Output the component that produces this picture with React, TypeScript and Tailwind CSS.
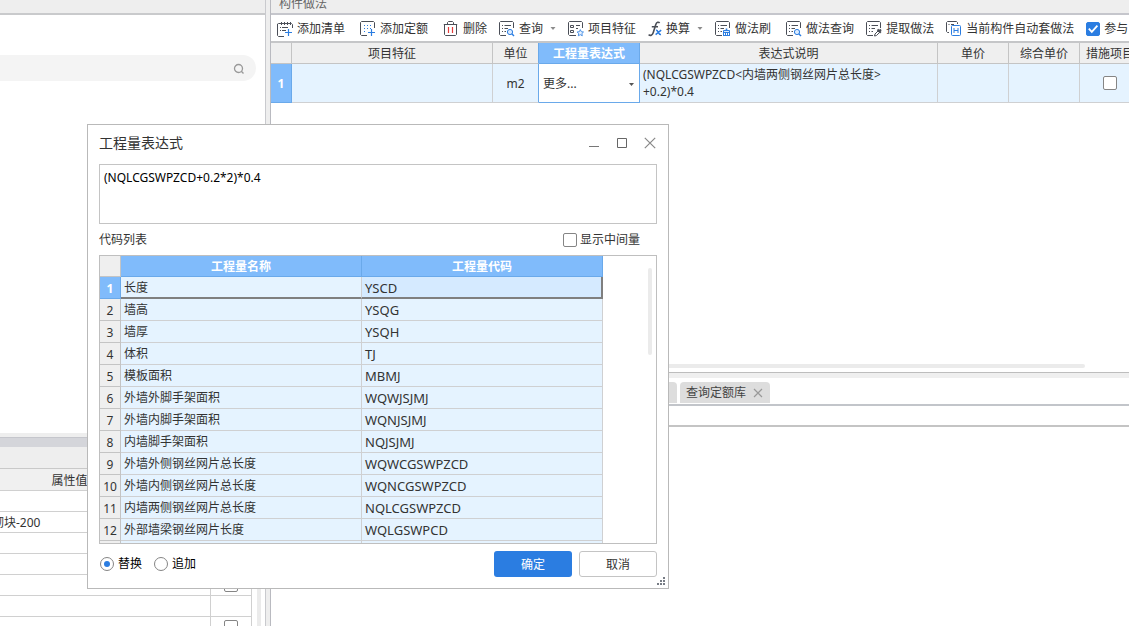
import { useState } from "react";
import type { ReactNode } from "react";

const INK = "#4a4e57";
const BLUE = "#2b7de1";

interface CodeRow {
  name: string;
  code: string;
}

const CODE_ROWS: CodeRow[] = [
  { name: "长度", code: "YSCD" },
  { name: "墙高", code: "YSQG" },
  { name: "墙厚", code: "YSQH" },
  { name: "体积", code: "TJ" },
  { name: "模板面积", code: "MBMJ" },
  { name: "外墙外脚手架面积", code: "WQWJSJMJ" },
  { name: "外墙内脚手架面积", code: "WQNJSJMJ" },
  { name: "内墙脚手架面积", code: "NQJSJMJ" },
  { name: "外墙外侧钢丝网片总长度", code: "WQWCGSWPZCD" },
  { name: "外墙内侧钢丝网片总长度", code: "WQNCGSWPZCD" },
  { name: "内墙两侧钢丝网片总长度", code: "NQLCGSWPZCD" },
  { name: "外部墙梁钢丝网片长度", code: "WQLGSWPCD" },
];

const PROPERTY_ROWS = [
  { value: "", check: false },
  { value: "砌块-200", check: false },
  { value: "", check: false },
  { value: "", check: false },
  { value: "", check: true },
  { value: "", check: false },
  { value: "", check: true },
];

function Icon({ children }: { children: ReactNode }) {
  return (
    <svg
      width="16"
      height="16"
      viewBox="0 0 16 16"
      fill="none"
      stroke={INK}
      strokeWidth="1"
      className="shrink-0"
      aria-hidden
    >
      {children}
    </svg>
  );
}

function AddListIcon() {
  return (
    <Icon>
      <path d="M7 15.5H1.5L.5 14.5V3L1.5 2.5H14.5L15.5 3.5V7" />
      <path d="M4.5 1V4M7.5 1V4M10.5 1V4M13.5 1V4" />
      <path d="M3 6.5H4M5 6.5H11M3 9.5H4M5 9.5H9" />
      <path d="M11.5 8V15M8 11.5H15" stroke={BLUE} strokeWidth="1.2" />
    </Icon>
  );
}

function AddQuotaIcon() {
  return (
    <Icon>
      <path d="M7 14.5H1.5L.5 13.5V1.5L1.5 .5H13.5L14.5 1.5V7" />
      <path
        d="M4 4.5H5M7 4.5H8M10 4.5H11M4 7.5H5M7 7.5H8M4 10.5H5M10 7.5H11"
        stroke={BLUE}
      />
      <path d="M11.5 8V15M8 11.5H15" stroke={BLUE} strokeWidth="1.2" />
    </Icon>
  );
}

function TrashIcon() {
  return (
    <Icon>
      <path d="M.8 3.5H14.2M4.5 3.5V1.5L5.5.5H9.5L10.5 1.5V3.5M1.5 3.5V13.5L2.5 14.5H12.5L13.5 13.5V3.5" />
      <path d="M5.5 6V12M9.5 6V12" stroke="#e33b3b" strokeWidth="1.2" />
    </Icon>
  );
}

function SheetFrame() {
  return (
    <>
      <path d="M7 14.5H1.5L.5 13.5V1.5L1.5 .5H13.5L14.5 1.5V7" />
      <path d="M3 4.5H4M5.5 4.5H12M3 7.5H4M5.5 7.5H9M3 10.5H4M5.5 10.5H7" />
    </>
  );
}

function QueryIcon() {
  return (
    <Icon>
      <SheetFrame />
      <circle cx="11" cy="11" r="2.6" stroke={BLUE} fill="#dcecff" />
      <path d="M12.8 12.8L15 15" stroke={BLUE} strokeWidth="1.4" />
    </Icon>
  );
}

function FeatureIcon() {
  return (
    <Icon>
      <path d="M8 14.5H1.5L.5 13.5V1.5L1.5 .5H13.5L14.5 1.5V7" />
      <path d="M2.5 4.5H5.5V6.5H2.5ZM2.5 9.5H5.5V11.5H2.5ZM8 4.5H12M8 7.5H10" />
      <path
        d="M12.3 8.6L13.3 10.7L15.5 11L13.9 12.5L14.3 14.8L12.3 13.7L10.3 14.8L10.7 12.5L9.1 11L11.3 10.7Z"
        stroke={BLUE}
        strokeWidth=".8"
        fill="#e8f2ff"
      />
    </Icon>
  );
}

function FormulaIcon() {
  return (
    <svg
      width="14"
      height="16"
      viewBox="0 0 14 16"
      fill="none"
      stroke={INK}
      className="shrink-0"
      aria-hidden
    >
      <path
        d="M11.6 2C10.6.6 8.6 1 7.8 3.6L5.2 11.8C4.4 14.4 2.4 15 .6 13.6M3.8 5.8H10"
        strokeWidth="1.6"
      />
      <path
        d="M8 9.2C10.4 8.6 10 14 13 13.4M13.2 9.2L7.6 13.6"
        stroke={BLUE}
        strokeWidth="1.5"
      />
    </svg>
  );
}

function BrushIcon() {
  return (
    <Icon>
      <SheetFrame />
      <path d="M11.5 7.5V10" stroke={BLUE} strokeWidth="1.6" />
      <path d="M8.5 9.5H14.5V11.5H8.5Z" stroke={BLUE} fill="#dcecff" />
      <path d="M8.5 11V14.5M10.5 11V14.5M12.5 11V14.5M14.5 11V14.5M8 14.5H15" stroke={BLUE} />
    </Icon>
  );
}

function ExtractIcon() {
  return (
    <Icon>
      <SheetFrame />
      <path d="M8.5 15L9 13L12 10L13.5 11.5L10.5 14.5Z" />
      <path d="M11.5 8.5L14.8 11.8M13 10.5L15 8.5" strokeWidth="2" />
    </Icon>
  );
}

function AutoIcon() {
  return (
    <Icon>
      <path d="M3 11.5H1.5L.5 10.5V1.5L1.5.5H10.5L11.5 1.5V3M2.5 3.5H3.5M5 3.5H8" />
      <rect x="5.5" y="4.5" width="9" height="10" rx="1" stroke={BLUE} fill="#fff" />
      <path d="M8 7V12M12 7V12M8 9.5H12" stroke={BLUE} />
    </Icon>
  );
}

function Caret() {
  return (
    <svg width="6" height="4" viewBox="0 0 6 4" className="ml-[3px]" aria-hidden>
      <path d="M.5 0H5.5L3 3Z" fill="#8b8b8b" />
    </svg>
  );
}

interface ToolProps {
  icon: ReactNode;
  label: string;
  menu?: boolean;
}

function Tool({ icon, label, menu }: ToolProps) {
  return (
    <button type="button" className="flex shrink-0 items-center gap-1 whitespace-nowrap">
      {icon}
      <span>{label}</span>
      {menu && <Caret />}
    </button>
  );
}

function CheckBox({ id, label, checked }: { id: string; label: string; checked?: boolean }) {
  return (
    <span className="inline-grid shrink-0 place-items-center align-middle">
      <input
        id={id}
        type="checkbox"
        defaultChecked={checked}
        aria-label={label}
        className="peer col-start-1 row-start-1 size-3.5 appearance-none rounded-xs border border-[#858585] bg-white checked:border-[#2b7de1] checked:bg-[#2b7de1]"
      />
      <svg
        width="14"
        height="14"
        viewBox="0 0 14 14"
        fill="none"
        className="pointer-events-none invisible col-start-1 row-start-1 peer-checked:visible"
        aria-hidden
      >
        <path d="M2.8 6.6L5.8 9.8L11.4 3.6" stroke="#fff" strokeWidth="1.8" />
      </svg>
    </span>
  );
}

function LeftPane() {
  return (
    <aside className="flex w-[266px] shrink-0 flex-col border-r border-[#c9cace] bg-white">
      <div className="h-[15px] shrink-0 border-b-2 border-[#c9cacc] bg-[#eee]" />
      <div className="min-h-0 flex-1 pt-10 pr-[9px]">
        <div className="flex h-[26px] items-center rounded-r-full bg-[#f4f4f4] pt-0.5 pr-[11px]">
          <input
            type="text"
            aria-label="搜索"
            className="h-full min-w-0 flex-1 bg-transparent px-2 outline-none"
          />
          <svg width="12" height="12" viewBox="0 0 12 12" fill="none" stroke="#999" aria-hidden>
            <circle cx="5.5" cy="5.5" r="4" strokeWidth="1.3" />
            <path d="M8.3 8.3L10.5 10.5" strokeWidth="1.3" />
          </svg>
        </div>
      </div>
      <div className="h-[193px] shrink-0 overflow-hidden">
        <div className="h-1 bg-[#eee]" />
        <div className="h-2.5 border-t border-[#c5c6cc] bg-[#d4d5da]" />
        <div className="h-[22px] border-b border-[#c9c9c9] bg-[#eee]" />
        <div className="flex gap-[5px]">
          <div className="flex min-w-0 flex-1 justify-end overflow-hidden">
            <table className="w-[323px] shrink-0 table-fixed border-separate border-spacing-0">
              <colgroup>
                <col className="w-[282px]" />
                <col className="w-[41px]" />
              </colgroup>
              <thead>
                <tr className="h-[22px] bg-[#f0f0f0]">
                  <th className="border-r border-b border-[#d0d0d0] p-0 pt-0.5 leading-4 font-normal">
                    属性值
                  </th>
                  <th className="border-r border-b border-[#d0d0d0] p-0" />
                </tr>
              </thead>
              <tbody>
                {PROPERTY_ROWS.map((row, i) => (
                  <tr key={i} className="h-[21px]">
                    <td className="border-r border-b border-[#d0d0d0] p-0 pt-0.5 pl-[63px] leading-4">
                      {row.value}
                    </td>
                    <td className="border-r border-b border-[#d0d0d0] p-0 text-center leading-none">
                      {row.check && <CheckBox id={`prop-${i}`} label="附加" />}
                    </td>
                  </tr>
                ))}
              </tbody>
            </table>
          </div>
          <div className="mr-1 w-1 bg-[#ebebeb]" />
        </div>
      </div>
    </aside>
  );
}

function Toolbar() {
  return (
    <div className="flex h-7 shrink-0 items-center gap-[15px] border-b-2 border-[#c5c6c8] bg-white pt-0.5 pl-1.5">
      <Tool icon={<AddListIcon />} label="添加清单" />
      <Tool icon={<AddQuotaIcon />} label="添加定额" />
      <div className="flex shrink-0 gap-3">
        <Tool icon={<TrashIcon />} label="删除" />
        <Tool icon={<QueryIcon />} label="查询" menu />
        <Tool icon={<FeatureIcon />} label="项目特征" />
        <Tool icon={<FormulaIcon />} label="换算" menu />
        <Tool icon={<BrushIcon />} label="做法刷" />
      </div>
      <div className="flex shrink-0 gap-3">
        <Tool icon={<QueryIcon />} label="做法查询" />
        <Tool icon={<ExtractIcon />} label="提取做法" />
        <Tool icon={<AutoIcon />} label="当前构件自动套做法" />
        <label className="flex items-center gap-1 whitespace-nowrap">
          <CheckBox id="join-auto" label="参与自动套" checked />
          参与自动套
        </label>
      </div>
    </div>
  );
}

const TH = "border-r border-b border-[#c4c4c4] bg-[#efefef] p-0 pt-0.5 leading-4 font-normal";
const TH_ACTIVE =
  "border-r border-b border-[#6aa9ea] bg-[#80bbfb] p-0 pt-0.5 leading-4 font-bold text-white";
const TD = "border-r border-b border-[#cfd0d2] bg-[#e5f3ff] p-0";

function MethodTable() {
  return (
    <table className="w-[870px] table-fixed border-separate border-spacing-0">
      <colgroup>
        <col className="w-[21px]" />
        <col className="w-[201px]" />
        <col className="w-[46px]" />
        <col className="w-[101px]" />
        <col className="w-[298px]" />
        <col className="w-[71px]" />
        <col className="w-[71px]" />
        <col className="w-[61px]" />
      </colgroup>
      <thead>
        <tr className="h-[21px]">
          <th className={TH} />
          <th className={TH}>项目特征</th>
          <th className="border-r border-b border-r-[#6aa9ea] border-b-[#c4c4c4] bg-[#efefef] p-0 pt-0.5 leading-4 font-normal">
            单位
          </th>
          <th className={TH_ACTIVE}>工程量表达式</th>
          <th className={TH}>表达式说明</th>
          <th className={TH}>单价</th>
          <th className={TH}>综合单价</th>
          <th className={TH}>措施项目</th>
        </tr>
      </thead>
      <tbody>
        <tr className="h-[39px]">
          <th className={TH_ACTIVE}>1</th>
          <td className={TD} />
          <td className="border-r border-b border-r-[#6aa9ea] border-b-[#cfd0d2] bg-[#e5f3ff] p-0 pt-0.5 text-center">
            m2
          </td>
          <td className="border-r border-b border-[#6aa9ea] bg-white p-0 pt-0.5">
            <div className="flex items-center pr-[5px] pl-1">
              <select
                aria-label="工程量表达式"
                className="min-w-0 flex-1 appearance-none bg-transparent outline-none"
              >
                <option>更多...</option>
              </select>
              <svg width="5" height="3" viewBox="0 0 5 3" aria-hidden>
                <path d="M0 0H5L2.5 3Z" fill="#555" />
              </svg>
            </div>
          </td>
          <td className="border-r border-b border-[#cfd0d2] bg-[#e5f3ff] p-0 pl-[3px] leading-[17px]">
            (NQLCGSWPZCD&lt;内墙两侧钢丝网片总长度&gt;
            <br />
            +0.2)*0.4
          </td>
          <td className={TD} />
          <td className={TD} />
          <td className="border-r border-b border-[#cfd0d2] bg-[#e5f3ff] p-0 text-center leading-none">
            <CheckBox id="measure" label="措施项目" />
          </td>
        </tr>
      </tbody>
    </table>
  );
}

function MainPane() {
  return (
    <main className="flex min-w-0 flex-1 flex-col overflow-hidden border-l border-[#b9bac0] bg-white">
      <h2 className="flex h-[15px] shrink-0 items-end overflow-hidden border-b-2 border-[#c5c6cc] bg-[#eee] pb-px pl-2 leading-4 text-[#666]">
        构件做法
      </h2>
      <Toolbar />
      <div className="min-h-0 flex-1 overflow-hidden">
        <MethodTable />
      </div>
      <div className="flex h-[262px] shrink-0 flex-col">
        <div className="mr-11 h-1 rounded-full bg-[#ebebeb]" />
        <div className="mt-1 h-1.5 border-t border-[#bdbdbd] bg-[#efefef]" />
        <div className="flex h-7 items-end gap-[3px] border-b-2 border-[#c2c5ca] pb-px pl-[316px]">
          <button
            type="button"
            aria-label="查询清单库"
            className="h-[21px] w-[90px] rounded-t-sm bg-[#ddd]"
          />
          <button
            type="button"
            className="flex h-[21px] w-[90px] items-center justify-between rounded-t-sm bg-[#ddd] pr-[7px] pl-1.5 whitespace-nowrap text-[#444]"
          >
            查询定额库
            <svg width="10" height="10" viewBox="0 0 10 10" stroke="#999" aria-hidden>
              <path d="M1 1L9 9M9 1L1 9" strokeWidth="1.2" />
            </svg>
          </button>
        </div>
        <div className="h-[21px] border-b-2 border-[#c4c4c4]" />
      </div>
    </main>
  );
}

function CodeTable() {
  return (
    <div className="flex h-[289px] justify-between overflow-hidden border border-[#bfbfbf] bg-white">
      <table className="h-fit w-[503px] shrink-0 table-fixed border-separate border-spacing-0">
        <colgroup>
          <col className="w-[21px]" />
          <col className="w-[241px]" />
          <col className="w-[241px]" />
        </colgroup>
        <thead>
          <tr className="h-[21px]">
            <th className={TH} />
            <th className={TH_ACTIVE}>工程量名称</th>
            <th className={TH_ACTIVE}>工程量代码</th>
          </tr>
        </thead>
        <tbody>
          {CODE_ROWS.map((row, i) =>
            i === 0 ? (
              <tr key={row.code} className="h-[22px]">
                <th className={TH_ACTIVE}>1</th>
                <td className="border-r border-b-2 border-r-[#cfd0d2] border-b-[#7f7f7f] bg-[#e5f3ff] p-0 pt-0.5 pl-[3px] leading-4">
                  {row.name}
                </td>
                <td className="border-r-2 border-b-2 border-[#7f7f7f] bg-[#d5eaff] p-0 pt-0.5 pl-[3px] text-[13px] leading-4">
                  {row.code}
                </td>
              </tr>
            ) : (
              <tr key={row.code} className="h-[22px] leading-4">
                <th className={TH}>{i + 1}</th>
                <td className="border-r border-b border-[#cfd0d2] bg-[#e5f3ff] p-0 pl-[3px]">
                  {row.name}
                </td>
                <td className="border-r border-b border-[#cfd0d2] bg-[#e5f3ff] p-0 pl-[3px] text-[13px] leading-4">
                  {row.code}
                </td>
              </tr>
            ),
          )}
          <tr className="h-[22px]">
            <th className={TH} />
            <td className={TD} />
            <td className={TD} />
          </tr>
        </tbody>
      </table>
      <div className="mt-3 mr-1 h-[87px] w-1 rounded-full bg-[#ebebeb]" />
    </div>
  );
}

function Radio({ value, label, checked }: { value: string; label: string; checked?: boolean }) {
  return (
    <label className="flex items-center gap-1 text-black">
      <span className="inline-grid place-items-center">
        <input
          type="radio"
          name="mode"
          value={value}
          defaultChecked={checked}
          className="peer col-start-1 row-start-1 size-3.5 appearance-none rounded-full border border-[#858585] bg-white"
        />
        <span className="pointer-events-none invisible col-start-1 row-start-1 size-1.5 rounded-full bg-[#2b7de1] peer-checked:visible" />
      </span>
      {label}
    </label>
  );
}

function ExpressionDialog() {
  const [expression, setExpression] = useState("(NQLCGSWPZCD+0.2*2)*0.4");

  return (
    <div
      role="dialog"
      aria-label="工程量表达式"
      className="absolute top-[124px] left-[87px] w-[582px] border border-[#b9b9b9] bg-white px-[11px] pb-[11px]"
    >
      <div className="flex h-[39px] items-center justify-between pr-px pb-[3px]">
        <h1 className="text-sm">工程量表达式</h1>
        <div className="flex items-center gap-4">
          <button type="button" aria-label="最小化">
            <svg width="12" height="12" viewBox="0 0 12 12" stroke="#777" aria-hidden>
              <path d="M1 9.5H11" />
            </svg>
          </button>
          <button type="button" aria-label="最大化">
            <svg width="12" height="12" viewBox="0 0 12 12" fill="none" stroke="#666" aria-hidden>
              <path d="M1.5 1.5H10.5V10.5H1.5Z" />
            </svg>
          </button>
          <button type="button" aria-label="关闭">
            <svg width="12" height="12" viewBox="0 0 12 12" stroke="#888" aria-hidden>
              <path d="M.8 .8L11.2 11.2M11.2 .8L.8 11.2" strokeWidth="1.2" />
            </svg>
          </button>
        </div>
      </div>
      <textarea
        aria-label="表达式"
        value={expression}
        onChange={(e) => setExpression(e.target.value)}
        className="block h-[60px] w-full resize-none border border-[#c4c4c4] px-1 py-[5px] leading-4 text-black outline-none"
      />
      <div className="flex h-[31px] items-center justify-between pr-[17px]">
        <span>代码列表</span>
        <label className="flex items-center gap-[3px]">
          <CheckBox id="show-middle" label="显示中间量" />
          显示中间量
        </label>
      </div>
      <CodeTable />
      <div className="flex items-center justify-between pt-[7px]">
        <div className="flex gap-3 pl-px">
          <Radio value="replace" label="替换" checked />
          <Radio value="append" label="追加" />
        </div>
        <div className="flex gap-[7px]">
          <button
            type="button"
            className="h-[26px] w-[78px] rounded-[3px] bg-[#2b7de1] pt-0.5 text-white"
          >
            确定
          </button>
          <button
            type="button"
            className="h-[26px] w-[78px] rounded-[3px] border border-[#c4c4c4] bg-white pt-0.5"
          >
            取消
          </button>
        </div>
      </div>
      <svg
        width="8"
        height="8"
        viewBox="0 0 8 8"
        fill="#777c85"
        className="absolute right-[3px] bottom-[3px]"
        aria-hidden
      >
        <path d="M6 0H8V2H6ZM3 3H5V5H3ZM6 3H8V5H6ZM0 6H2V8H0ZM3 6H5V8H3ZM6 6H8V8H6Z" />
      </svg>
    </div>
  );
}

export default function App() {
  return (
    <div className="relative flex h-screen overflow-hidden bg-[#eee] font-['Noto_Sans','Noto_Sans_CJK_SC',sans-serif] text-xs text-[#333]">
      <LeftPane />
      <div className="w-1 shrink-0" />
      <MainPane />
      <ExpressionDialog />
    </div>
  );
}
